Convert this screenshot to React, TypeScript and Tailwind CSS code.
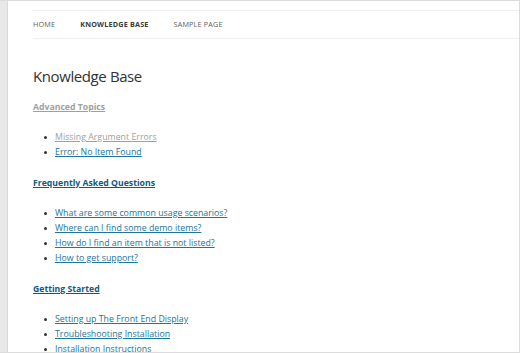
import React from 'react';

const sections = [
  {
    title: 'Advanced Topics',
    visited: true,
    items: [
      { label: 'Missing Argument Errors', visited: true },
      { label: 'Error: No Item Found', visited: false },
    ],
  },
  {
    title: 'Frequently Asked Questions',
    visited: false,
    items: [
      { label: 'What are some common usage scenarios?', visited: false },
      { label: 'Where can I find some demo items?', visited: false },
      { label: 'How do I find an item that is not listed?', visited: false },
      { label: 'How to get support?', visited: false },
    ],
  },
  {
    title: 'Getting Started',
    visited: false,
    items: [
      { label: 'Setting up The Front End Display', visited: false },
      { label: 'Troubleshooting Installation', visited: false },
      { label: 'Installation Instructions', visited: false },
    ],
  },
];

export default function App() {
  return (
    <div
      className="w-[520px] h-[353px] overflow-hidden flex bg-white border-t border-b border-r border-[#dcdcdc] text-[#444]"
      style={{ fontFamily: '"Open Sans", "Noto Sans", sans-serif' }}
    >
      {/* left page gutter */}
      <div className="w-[8px] shrink-0 bg-[#e8e8e8] border-r border-[#dadada]" />

      <div className="flex-1 pl-[25px] pt-[9px]">
        {/* Menu */}
        <nav className="h-[29px] flex items-center gap-[25px] border-t border-b border-[#efefef] text-[7.2px] uppercase tracking-[0.2px] text-[#5e5e5e]">
          <a>Home</a>
          <a className="font-bold text-[#3a3a3a]">Knowledge Base</a>
          <a>Sample Page</a>
        </nav>

        <h1 className="mt-[28px] text-[15px] leading-[18px] tracking-[-0.4px] text-[#333]">Knowledge Base</h1>

        <div className="mt-[7px]">
          {sections.map((s) => (
            <div key={s.title} className="mb-[8px]">
              <a
                className={`text-[8.7px] font-bold underline leading-[14px] ${
                  s.visited ? 'text-[#9f9f9f]' : 'text-[#0f5a82]'
                }`}
              >
                {s.title}
              </a>
              <ul className="mt-[14px] pl-[11px]">
                {s.items.map((it) => (
                  <li key={it.label} className="flex items-center gap-[8px] text-[8.8px] leading-[15px]">
                    <span className="w-[3px] h-[3px] rounded-full bg-[#333] shrink-0" />
                    <a className={`underline ${it.visited ? 'text-[#9f9f9f]' : 'text-[#21759b]'}`}>{it.label}</a>
                  </li>
                ))}
              </ul>
            </div>
          ))}
        </div>
      </div>
    </div>
  );
}
